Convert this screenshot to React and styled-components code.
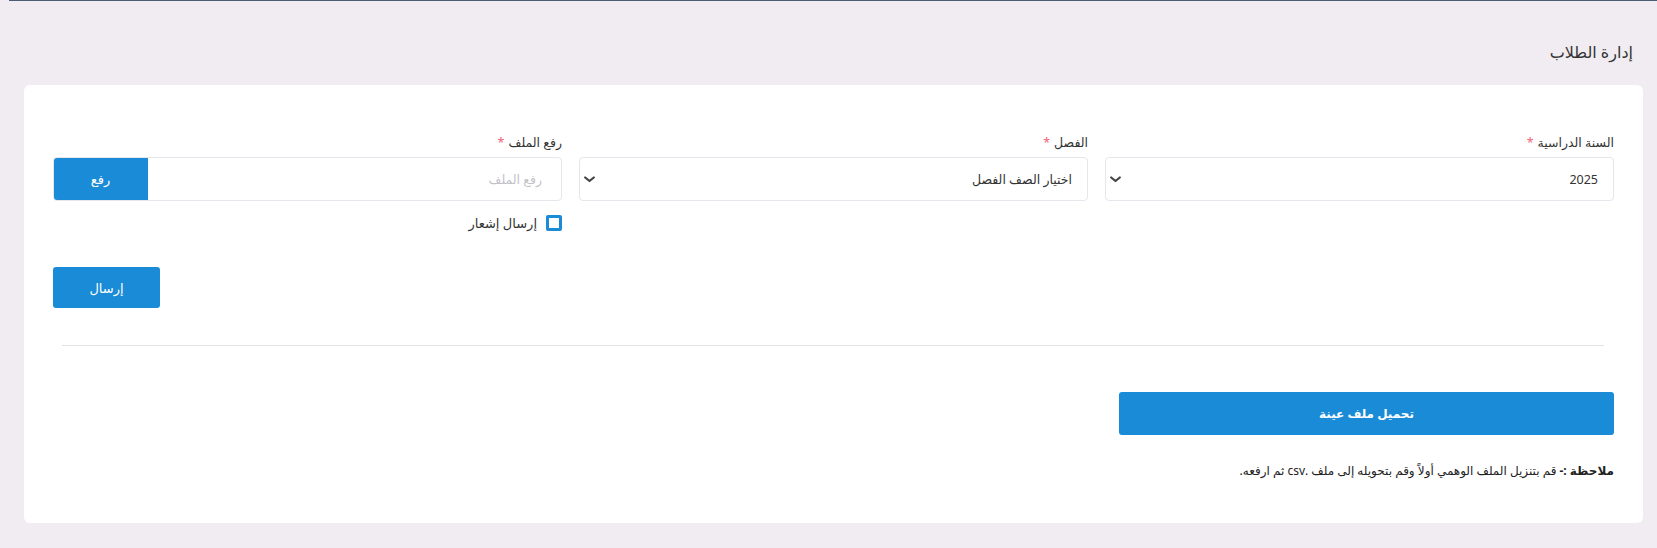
import React from 'react';
import styled, { createGlobalStyle } from 'styled-components';

const GlobalStyle = createGlobalStyle`
  html, body {
    margin: 0;
    padding: 0;
    background: #f0ecf2;
  }
  body {
    font-family: "Noto Sans", "DejaVu Sans", sans-serif;
    color: #333;
  }
  * { box-sizing: border-box; }
`;

const BLUE = '#1a8bd7';

const TopLine = styled.div`
  height: 1px;
  margin-left: 9px;
  background: #4b5b78;
`;

const Page = styled.div`
  direction: rtl;
  padding: 41px 14px 25px 24px;
`;

const Heading = styled.h1`
  margin: 0 10px 22px 0;
  font-size: 16px;
  font-weight: 400;
  line-height: 21px;
  color: #333;
`;

const Card = styled.div`
  background: #fff;
  border-radius: 6px;
  padding: 48px 29px 42px;
`;

const FieldGrid = styled.div`
  display: grid;
  grid-template-columns: repeat(3, 1fr);
  column-gap: 17px;
`;

const Field = styled.div`
  display: flex;
  flex-direction: column;
`;

const Label = styled.label`
  font-size: 12.5px;
  line-height: 20px;
  color: #333;
  margin-bottom: 4px;
`;

const Star = styled.span`
  color: #f0637a;
  margin-right: 4px;
`;

const SelectBox = styled.div`
  height: 44px;
  border: 1px solid #e6e6ec;
  border-radius: 4px;
  display: flex;
  align-items: center;
  justify-content: space-between;
  padding: 0 15px 0 4px;
  font-size: 12.5px;
  color: #333;
`;

const Chevron = () => (
  <svg width="11" height="7" viewBox="0 0 11 7">
    <path d="M1.2 1.5 L5.5 5 L9.8 1.5" fill="none" stroke="#444" strokeWidth="2.2" strokeLinecap="round" strokeLinejoin="round" />
  </svg>
);

const FileGroup = styled.div`
  height: 44px;
  display: flex;
  border: 1px solid #e6e6ec;
  border-radius: 4px;
  overflow: hidden;
`;

const FileInput = styled.div`
  flex: 1;
  display: flex;
  align-items: center;
  padding: 0 19px;
  font-size: 12.5px;
  color: #c2c2c8;
`;

const UploadButton = styled.div`
  width: 95px;
  margin: -1px;
  background: ${BLUE};
  color: #fff;
  display: flex;
  align-items: center;
  justify-content: center;
  font-size: 13px;
`;

const CheckRow = styled.div`
  display: flex;
  align-items: center;
  gap: 9px;
  margin-top: 13px;
  font-size: 13px;
  color: #333;
`;

const CheckBox = styled.span`
  width: 16px;
  height: 16px;
  border: 3px solid ${BLUE};
  border-radius: 2px;
  background: #fff;
`;

const ActionRow = styled.div`
  display: flex;
  justify-content: flex-end;
  margin-top: 35px;
`;

const Button = styled.button`
  width: ${p => p.$width}px;
  height: ${p => p.$height}px;
  border: none;
  border-radius: 3px;
  background: ${BLUE};
  color: #fff;
  font-family: inherit;
  font-size: ${p => (p.$bold ? 12 : 13)}px;
  font-weight: ${p => (p.$bold ? 700 : 400)};
  cursor: pointer;
`;

const Divider = styled.hr`
  border: none;
  border-top: 1px solid #e3e3e6;
  margin: 37px 10px 46px 9px;
`;

const Note = styled.p`
  margin: 26px 0 0;
  font-size: 12px;
  line-height: 20px;
  color: #222;
`;

export default function App() {
  return (
    <>
      <GlobalStyle />
      <TopLine />
      <Page dir="rtl">
        <Heading>إدارة الطلاب</Heading>
        <Card>
          <FieldGrid>
            <Field>
              <Label>السنة الدراسية<Star>*</Star></Label>
              <SelectBox>
                <span>2025</span>
                <Chevron />
              </SelectBox>
            </Field>
            <Field>
              <Label>الفصل<Star>*</Star></Label>
              <SelectBox>
                <span>اختيار الصف الفصل</span>
                <Chevron />
              </SelectBox>
            </Field>
            <Field>
              <Label>رفع الملف<Star>*</Star></Label>
              <FileGroup>
                <FileInput>رفع الملف</FileInput>
                <UploadButton>رفع</UploadButton>
              </FileGroup>
              <CheckRow>
                <CheckBox />
                <span>إرسال إشعار</span>
              </CheckRow>
            </Field>
          </FieldGrid>

          <ActionRow>
            <Button $width={107} $height={41}>إرسال</Button>
          </ActionRow>

          <Divider />

          <Button $width={495} $height={43} $bold>تحميل ملف عينة</Button>

          <Note>
            <strong>ملاحظة :-</strong> قم بتنزيل الملف الوهمي أولاً وقم بتحويله إلى ملف .csv ثم ارفعه.
          </Note>
        </Card>
      </Page>
    </>
  );
}
